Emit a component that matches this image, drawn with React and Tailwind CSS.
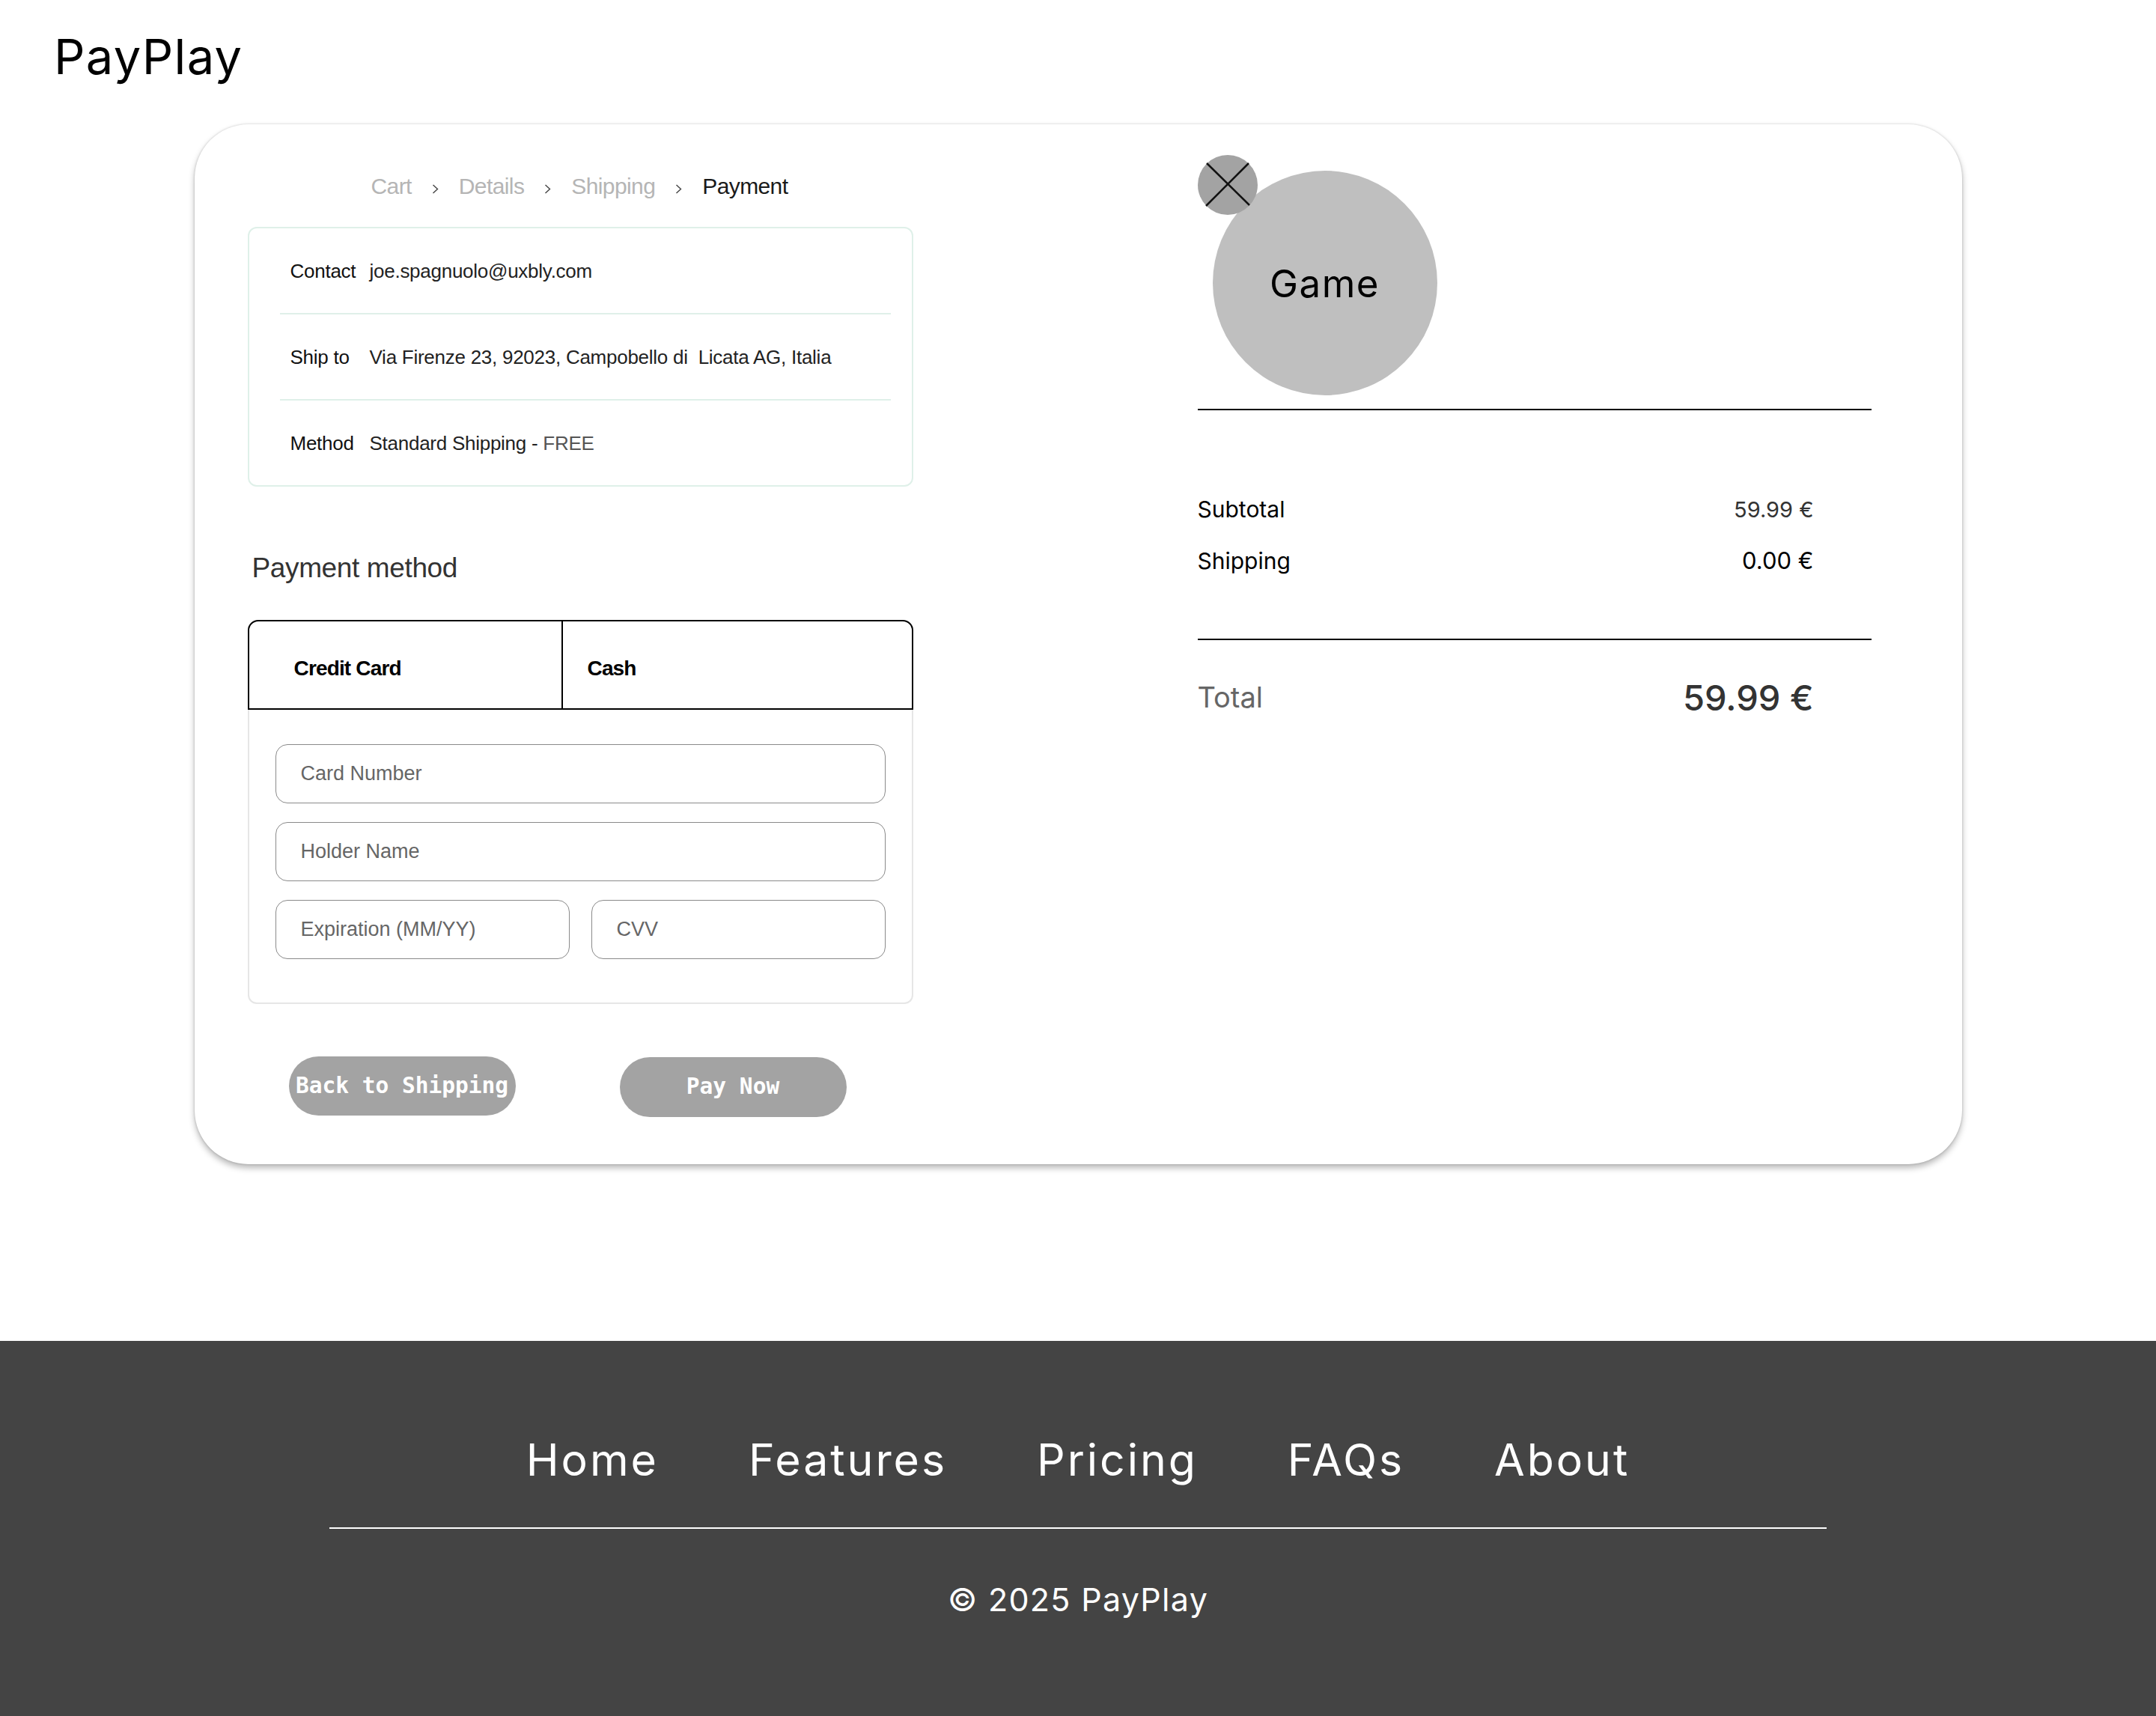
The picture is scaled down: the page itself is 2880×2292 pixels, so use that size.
import React from 'react';

const poppins = "font-['Inter',sans-serif]";

const Chevron = () => (
  <svg width="9" height="13" viewBox="0 0 9 13" className="mt-[6px]">
    <polyline points="1.5,1 7.5,6.5 1.5,12" fill="none" stroke="#444" strokeWidth="1.4" />
  </svg>
);

const InfoRow = ({ label, children }) => (
  <div className="flex h-[113px] items-center pl-[55px] text-[26px] leading-none tracking-[-0.01em]">
    <span className="w-[106px] shrink-0 text-[#111]">{label}</span>
    <span className="text-[#222]">{children}</span>
  </div>
);

const Field = ({ placeholder, className = '' }) => (
  <input
    placeholder={placeholder}
    className={`h-[79px] rounded-[16px] border border-[#8a8a8a] bg-white pl-[33px] text-[27px] text-[#666] outline-none placeholder:text-[#666] ${className}`}
  />
);

const SummaryRow = ({ label, value, valueClass }) => (
  <div className="flex items-center justify-between pr-[77px] leading-none">
    <span className="text-[30px] text-black">{label}</span>
    <span className={valueClass}>{value}</span>
  </div>
);

export default function App() {
  const steps = ['Cart', 'Details', 'Shipping'];
  const links = ['Home', 'Features', 'Pricing', 'FAQs', 'About'];

  return (
    <div className="flex min-h-[2292px] w-[2880px] flex-col bg-white font-['Liberation_Sans',sans-serif]">
      <header className={`h-[166px] pl-[72px] pt-[43px] ${poppins}`}>
        <h1 className="text-[65px] leading-none tracking-[0.02em] text-black">PayPlay</h1>
      </header>

      <div className="mx-auto flex h-[1389px] w-[2361px] rounded-[72px] bg-white pl-[71px] shadow-[0_5px_8px_rgba(0,0,0,0.28),0_0_3px_rgba(0,0,0,0.18)]">
        {/* left column */}
        <div className="flex w-[889px] flex-col pt-[68px]">
          <nav className="flex items-center gap-[27px] pl-[165px] text-[30px] leading-none tracking-[-0.02em]">
            {steps.map((s) => (
              <React.Fragment key={s}>
                <span className="text-[#b5b5b5]">{s}</span>
                <Chevron />
              </React.Fragment>
            ))}
            <span className="text-[#1a1a1a]">Payment</span>
          </nav>

          <div className="mt-[39px] rounded-[12px] border-2 border-[#dff0e9]">
            <InfoRow label="Contact">joe.spagnuolo@uxbly.com</InfoRow>
            <div className="ml-[41px] mr-[28px] h-[2px] bg-[#dff0e9]" />
            <InfoRow label="Ship to">Via Firenze 23, 92023, Campobello di{'\u00a0'} Licata AG, Italia</InfoRow>
            <div className="ml-[41px] mr-[28px] h-[2px] bg-[#dff0e9]" />
            <InfoRow label="Method">
              Standard Shipping - <span className="text-[#555]">FREE</span>
            </InfoRow>
          </div>

          <h2 className="mt-[90px] pl-[6px] text-[37px] leading-none tracking-[-0.01em] text-[#333]">Payment method</h2>

          <div className="mt-[51px] flex h-[120px] rounded-t-[14px] border-2 border-black">
            <div className="flex w-[419px] items-center border-r-2 border-black pl-[60px] pt-[10px] text-[28px] font-bold leading-none tracking-[-0.03em] text-black">
              Credit Card
            </div>
            <div className="flex flex-1 items-center pl-[33px] pt-[10px] text-[28px] font-bold leading-none tracking-[-0.03em] text-black">
              Cash
            </div>
          </div>
          <div className="flex flex-col gap-[25px] rounded-b-[12px] border-2 border-t-0 border-[#e6e6e6] px-[35px] pb-[58px] pt-[46px]">
            <Field placeholder="Card Number" />
            <Field placeholder="Holder Name" />
            <div className="grid grid-cols-2 gap-[29px]">
              <Field placeholder="Expiration (MM/YY)" className="w-full" />
              <Field placeholder="CVV" className="w-full" />
            </div>
          </div>

          <div className="mt-[70px] flex items-start gap-[139px] pl-[55px] font-['DejaVu_Sans_Mono',monospace] text-[29.5px] font-bold leading-none text-white">
            <button className="flex h-[79px] w-[303px] items-center justify-center rounded-full bg-[#a3a3a3]">
              Back to Shipping
            </button>
            <button className="mt-[1px] flex h-[80px] w-[303px] items-center justify-center rounded-full bg-[#a3a3a3]">
              Pay Now
            </button>
          </div>
        </div>

        {/* right column */}
        <div className={`ml-[380px] flex w-[900px] flex-col pt-[41px] ${poppins}`}>
          <div className="relative pl-[20px] pt-[21px]">
            <div className="flex h-[300px] w-[300px] items-center justify-center rounded-full bg-[#bfbfbf]">
              <span className="text-[51px] leading-none tracking-[0.03em] text-black">Game</span>
            </div>
            <div className="absolute left-0 top-0 h-[80px] w-[80px] rounded-full bg-[#a3a3a3]">
              <svg width="80" height="80" viewBox="0 0 80 80">
                <line x1="12" y1="11" x2="69" y2="67" stroke="#111" strokeWidth="2.5" />
                <line x1="68" y1="11" x2="11" y2="68" stroke="#111" strokeWidth="2.5" />
              </svg>
            </div>
          </div>
          <div className="mt-[18px] h-[2px] bg-black" />

          <div className="mt-[117px]">
            <SummaryRow label="Subtotal" value="59.99 €" valueClass="text-[29px] text-[#333]" />
          </div>
          <div className="mt-[38px]">
            <SummaryRow label="Shipping" value="0.00 €" valueClass="text-[31px] text-black" />
          </div>
          <div className="mt-[89px] h-[2px] bg-black" />
          <div className="mt-[52px] flex h-[48px] items-center justify-between pr-[77px] leading-none">
            <span className="text-[38px] text-[#666]">Total</span>
            <span className="text-[47px] font-medium text-[#333]">59.99 €</span>
          </div>
        </div>
      </div>

      <footer className={`mt-auto h-[501px] bg-[#444444] pt-[129px] text-white ${poppins}`}>
        <nav className="flex justify-center gap-[120px] text-[59px] leading-none tracking-[0.05em]">
          {links.map((l) => (
            <a key={l} href="#" className="text-white">
              {l}
            </a>
          ))}
        </nav>
        <div className="mx-auto mt-[61px] h-[2px] w-[2000px] bg-white" />
        <p className="mt-[73px] text-center text-[43px] leading-none tracking-[0.03em]">© 2025 PayPlay</p>
      </footer>
    </div>
  );
}
